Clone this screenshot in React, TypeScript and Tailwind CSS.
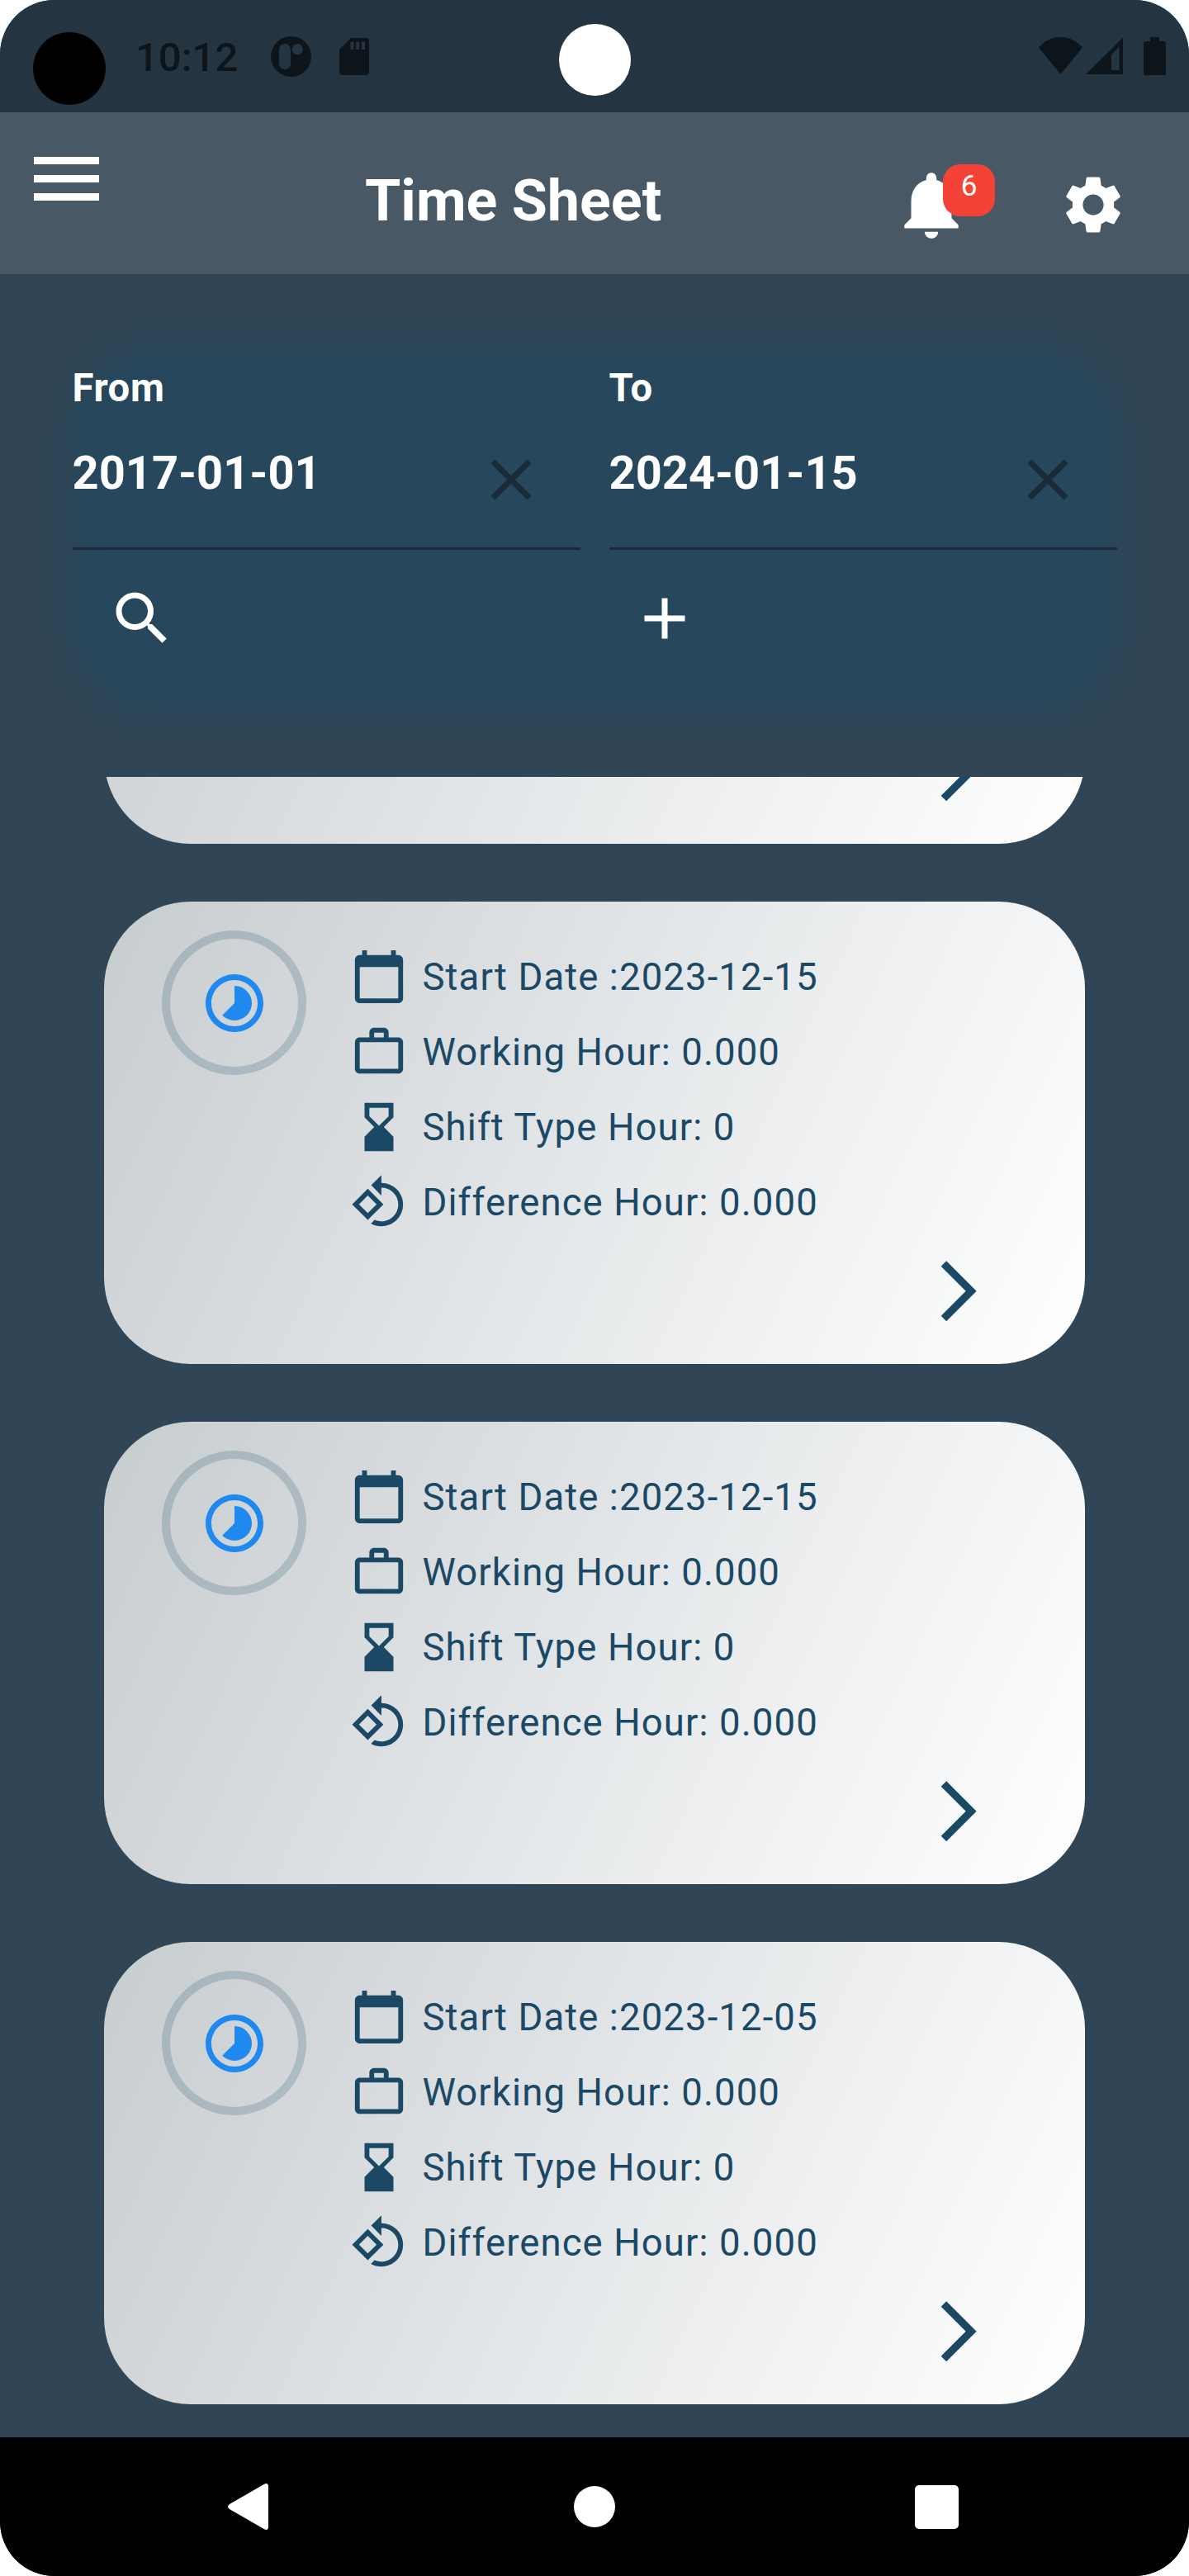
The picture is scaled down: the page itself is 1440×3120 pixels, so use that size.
import React from "react";
import {
  MdAdd,
  MdArrowForwardIos,
  MdCalendarToday,
  MdClose,
  MdHourglassBottom,
  MdNotifications,
  MdRotate90DegreesCcw,
  MdSearch,
  MdSettings,
  MdTimelapse,
  MdWorkOutline,
} from "react-icons/md";

type Entry = { date: string; working: string; shift: string; difference: string };

const entries: Entry[] = [
  { date: "2023-12-15", working: "0.000", shift: "0", difference: "0.000" },
  { date: "2023-12-15", working: "0.000", shift: "0", difference: "0.000" },
  { date: "2023-12-05", working: "0.000", shift: "0", difference: "0.000" },
];

function StatusBar() {
  return (
    <div className="relative flex h-[136px] shrink-0 items-start bg-[#243541] text-[#0d151b]">
      <div className="ml-[40px] mt-[39px] size-[88px] rounded-full bg-black" />
      <div className="ml-[36px] mt-[41px] w-[124px] text-[49px] leading-[58px] font-medium whitespace-nowrap">10:12</div>
      <svg className="ml-[40px] mt-[44px] h-[49px] w-[49px]" viewBox="0 0 49 49" fill="currentColor">
        <path
          fillRule="evenodd"
          d="M24.5 0a24.5 24.5 0 1 1 0 49a24.5 24.5 0 1 1 0-49zM17 9a7 7 0 0 0-7 7v17a7 7 0 0 0 14 0V16a7 7 0 0 0-7-7zM32.300 9a6.500 6.700 0 1 0 0 13.400a6.500 6.700 0 1 0 0-13.400z"
        />
      </svg>
      <svg className="ml-[34px] mt-[46px] h-[45px] w-[36px]" viewBox="0 0 36 45" fill="currentColor">
        <path
          fillRule="evenodd"
          d="M14 0H32a4 4 0 0 1 4 4V41a4 4 0 0 1-4 4H4a4 4 0 0 1-4-4V14zM13.500 4.700v9.300h4V4.700zM20.200 4.700v9.300h4V4.700zM27 4.700v9.300h4V4.700z"
        />
      </svg>
      <div className="absolute left-[677px] top-[29px] size-[87px] rounded-full bg-white" />
      <div className="ml-auto mr-[28px] mt-[45px] flex">
        <svg className="h-[45px] w-[53px]" viewBox="0 0 53 45" fill="currentColor">
          <path d="M0 12.500C7 4.500 16 0 26.500 0S46 4.500 53 12.500L26.500 45z" />
        </svg>
        <svg className="ml-[4px] h-[45px] w-[45px]" viewBox="0 0 45 45" fill="currentColor">
          <path fillRule="evenodd" d="M45 .500V45H0zM40.500 11.500L31 21V40h9.500z" />
        </svg>
        <svg className="ml-[25px] h-[46px] w-[27px]" viewBox="0 0 27 46" fill="currentColor">
          <path d="M8 0H19V5H24.500A2.500 2.500 0 0 1 27 7.500V43.500A2.500 2.500 0 0 1 24.500 46H2.500A2.500 2.500 0 0 1 0 43.500V7.500A2.500 2.500 0 0 1 2.500 5H8z" />
        </svg>
      </div>
    </div>
  );
}

function AppBar() {
  return (
    <div className="flex h-[196px] shrink-0 items-start bg-[#485965] text-white">
      <div className="ml-[41px] mt-[54px] flex w-[79px] flex-col gap-[13px]">
        <div className="h-[9px] bg-white" />
        <div className="h-[9px] bg-white" />
        <div className="h-[9px] bg-white" />
      </div>
      <div className="ml-[322px] mt-[66px] w-[369px] text-[70px] leading-[82px] font-bold whitespace-nowrap">Time Sheet</div>
      <div className="relative ml-[268px] mt-[63px]">
        <MdNotifications className="size-[98px]" />
        <div className="absolute left-[63px] top-0 h-[63px] w-[63px] rounded-[21px] bg-[#f44336] text-center text-[35px] leading-[54px]">
          6
        </div>
      </div>
      <MdSettings className="ml-[105px] mt-[70px] size-[84px]" />
    </div>
  );
}

function DateField({ label, value }: { label: string; value: string }) {
  return (
    <div className="h-[239px] w-[615px] border-b-[3px] border-[#192b38] text-white">
      <div className="pt-[15px] text-[47.250px] leading-[56px] font-bold tracking-[0.600px]">{label}</div>
      <div className="mt-[26px] flex items-start justify-between">
        <div className="mt-[16px] text-[56px] leading-[66px] font-bold">{value}</div>
        <MdClose className="mr-[42px] mt-[15px] size-[84px] text-[#192b38]" />
      </div>
    </div>
  );
}

function FilterPanel() {
  return (
    <div className="relative mx-[87.500px] mt-[95px] h-[514px] shrink-0">
      <div className="absolute inset-x-0 top-[-7px] h-[445px] rounded-[105px] bg-[#26475c] blur-[16px]" />
      <div className="relative flex gap-[35px]">
        <DateField label="From" value="2017-01-01" />
        <DateField label="To" value="2024-01-15" />
      </div>
      <div className="relative mt-[41px] flex text-white">
        <MdSearch className="ml-[42px] size-[84px]" />
        <MdAdd className="ml-[549px] size-[84px]" />
      </div>
    </div>
  );
}

function Row({ icon, text }: { icon: React.ReactNode; text: string }) {
  return (
    <div className="flex h-[70px] items-center gap-[18px]">
      {icon}
      <span className="text-[45.500px] leading-[53px] tracking-[1.100px] whitespace-nowrap">{text}</span>
    </div>
  );
}

function Card({ entry }: { entry?: Entry }) {
  return (
    <div className="flex h-[560px] w-[1188px] shrink-0 rounded-[105px] bg-[linear-gradient(115.200deg,#c7cccf_0%,#e4e7e9_50%,#ffffff_100%)] text-[#1b4965]">
      {entry && (
        <>
          <div className="ml-[70px] mt-[35px] flex size-[175px] items-center justify-center rounded-full border-[10.500px] border-[#1b4965]/20">
            <MdTimelapse className="size-[84px] shrink-0 text-[#2089f0]" />
          </div>
          <div className="ml-[52.500px] mt-[56px] flex flex-col gap-[21px]">
            <Row icon={<MdCalendarToday className="size-[70px]" />} text={"Start Date :" + entry.date} />
            <Row icon={<MdWorkOutline className="size-[70px]" />} text={"Working Hour: " + entry.working} />
            <Row icon={<MdHourglassBottom className="size-[70px]" />} text={"Shift Type Hour: " + entry.shift} />
            <Row icon={<MdRotate90DegreesCcw className="size-[70px]" />} text={"Difference Hour: " + entry.difference} />
          </div>
        </>
      )}
      <MdArrowForwardIos className="ml-auto mr-[109.500px] mt-[427.500px] size-[87.500px]" />
    </div>
  );
}

function NavBar() {
  return (
    <div className="flex h-[168px] shrink-0 items-center bg-black">
      <svg className="ml-[276px] h-[56px] w-[50px]" viewBox="0 0 50 56" fill="white">
        <path d="M2 25L44 .800Q49 -1.500 49 4V52Q49 57.500 44 55.200L2 31Q-2 28 2 25z" />
      </svg>
      <div className="ml-[369px] size-[50px] rounded-full bg-white" />
      <div className="ml-[363px] size-[53px] rounded-[5px] bg-white" />
    </div>
  );
}

export default function App() {
  return (
    <div className="h-[3120px] w-[1440px] bg-white font-[Roboto,sans-serif]">
      <div className="flex h-full flex-col overflow-hidden rounded-[66px] bg-[#304656]">
        <StatusBar />
        <AppBar />
        <FilterPanel />
        {/* The topmost card is scrolled up so only its lower edge shows. */}
        <div className="flex h-[2011px] shrink-0 flex-col items-center justify-end gap-[70px] overflow-hidden pb-[40px]">
          <Card />
          {entries.map((e, i) => (
            <Card key={i} entry={e} />
          ))}
        </div>
        <NavBar />
      </div>
    </div>
  );
}
